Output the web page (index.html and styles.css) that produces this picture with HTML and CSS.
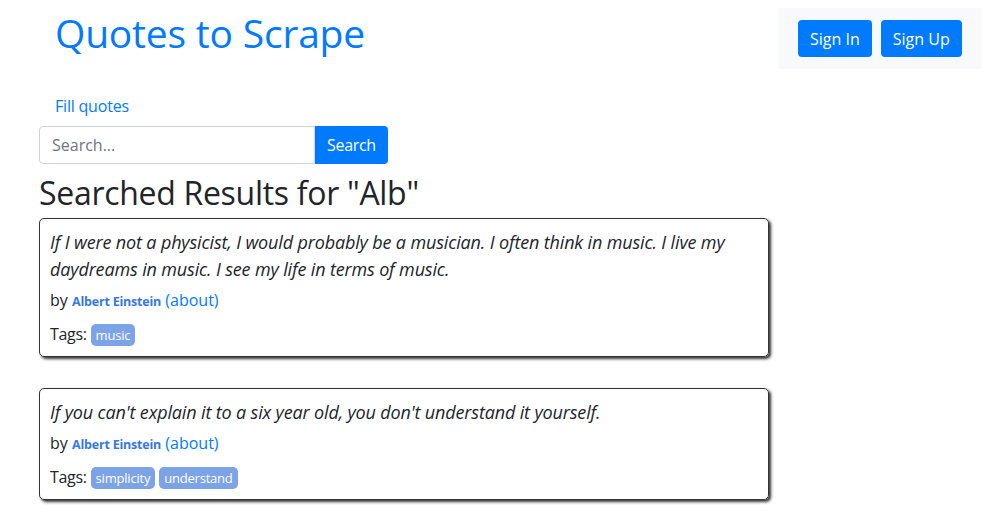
FILE: index.html
```html
<!DOCTYPE html>
<html>
<head>
<meta charset="utf-8">
<link rel="stylesheet" href="styles.css">
</head>
<body>
<div class="header">
  <div class="brand"><h1><a href="#">Quotes to Scrape</a></h1></div>
  <div class="auth">
    <a class="btn" href="#">Sign In</a>
    <a class="btn" href="#">Sign Up</a>
  </div>
</div>
<div class="main">
  <div class="fill"><a href="#">Fill quotes</a></div>
  <form class="search">
    <input class="search-input" type="text" placeholder="Search...">
    <button class="search-btn" type="button">Search</button>
  </form>
  <h2 class="title">Searched Results for "Alb"</h2>
  <div class="quote">
    <span class="text">If I were not a physicist, I would probably be a musician. I often think in music. I live my daydreams in music. I see my life in terms of music.</span>
    <span class="by">by <small class="author">Albert Einstein</small> <a href="#">(about)</a></span>
    <div class="tags">Tags: <a class="tag" href="#">music</a></div>
  </div>
  <div class="quote">
    <span class="text">If you can't explain it to a six year old, you don't understand it yourself.</span>
    <span class="by">by <small class="author">Albert Einstein</small> <a href="#">(about)</a></span>
    <div class="tags">Tags: <a class="tag" href="#">simplicity</a> <a class="tag" href="#">understand</a></div>
  </div>
</div>
</body>
</html>
```
FILE: styles.css
```css
body {
  margin: 0;
  font-family: "Open Sans", "Noto Sans", sans-serif;
  font-size: 16px;
  line-height: 1.5;
  color: #212529;
  background: #fff;
}
a { color: #007bff; text-decoration: none; }
.header {
  display: flex;
  justify-content: space-between;
  align-items: flex-start;
  padding-top: 8px;
}
.brand { padding-left: 55px; padding-top: 2px; }
.brand h1 {
  margin: 0;
  font-size: 39px;
  font-weight: 500;
  line-height: 1.2;
  letter-spacing: -0.2px;
}
.auth {
  background: #f8f9fa;
  width: 164px;
  height: 37px;
  padding: 12px 20px;
  margin-right: 4px;
  display: flex;
  gap: 9px;
}
.btn {
  display: block;
  background: #007bff;
  color: #fff;
  border-radius: 4px;
  padding: 0 12px;
  height: 37px;
  line-height: 38px;
}
.main { padding-left: 39px; width: 730px; }
.fill { padding-left: 16px; margin-top: 25px; line-height: 24px; letter-spacing: -0.2px; }
.search { display: flex; margin: 8px 0 0; }
.search-input {
  width: 276px;
  height: 38px;
  box-sizing: border-box;
  border: 1px solid #ced4da;
  border-radius: 4px 0 0 4px;
  padding: 0 12px;
  font: inherit;
  color: #495057;
}
.search-input::placeholder { color: #6c757d; }
.search-btn {
  height: 38px;
  border: 0;
  background: #007bff;
  color: #fff;
  font: inherit;
  letter-spacing: -0.3px;
  padding: 0 12px;
  border-radius: 0 4px 4px 0;
}
.title {
  margin: 10px 0 6px;
  font-size: 32px;
  font-weight: 500;
  line-height: 1.2;
  letter-spacing: -0.3px;
}
.quote {
  padding: 10px;
  margin-bottom: 31px;
  border: 1px solid #333;
  border-radius: 5px;
  box-shadow: 2px 2px 3px #333;
}
.text {
  display: block;
  font-size: 18px;
  line-height: 27px;
  font-style: italic;
  letter-spacing: -0.15px;
  margin-bottom: 5px;
}
.by { display: block; }
.author { font-weight: bold; color: #3677e8; font-size: 12.5px; letter-spacing: -0.2px; }
.tags { margin-top: 10px; letter-spacing: -0.3px; }
.tag {
  background: #7ca3e6;
  color: #fff;
  font-size: 13px;
  padding: 2px 5px;
  border-radius: 5px;
  letter-spacing: -0.2px;
}
```
